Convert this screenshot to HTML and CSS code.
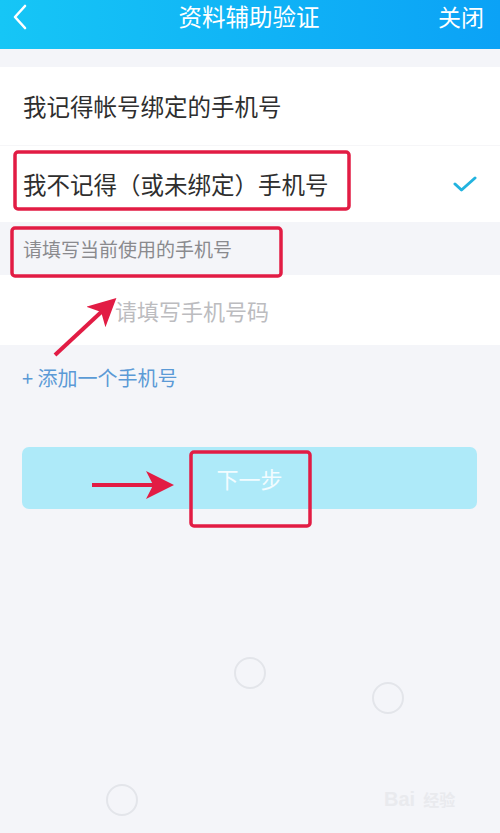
FILE: index.html
```html
<!DOCTYPE html>
<html lang="zh-CN">
<head>
  <meta charset="UTF-8">
  <meta name="viewport" content="width=device-width, initial-scale=1.0">
  <title>资料辅助验证</title>
  <link rel="stylesheet" href="styles.css">
</head>
<body>
  <div class="page">
    <header class="topbar">
      <svg class="back" width="16" height="26" viewBox="0 0 16 26">
        <polyline points="13,2 3,13 13,24" fill="none" stroke="#fff" stroke-width="2.6" stroke-linecap="round" stroke-linejoin="round"/>
      </svg>
      <h1 class="title">资料辅助验证</h1>
      <span class="close">关闭</span>
    </header>

    <div class="options">
      <div class="option">我记得帐号绑定的手机号</div>
      <div class="option selected">
        <span>我不记得（或未绑定）手机号</span>
        <svg class="check" width="24" height="18" viewBox="0 0 24 18">
          <polyline points="2,9 8.5,15 22,3" fill="none" stroke="#22b3df" stroke-width="3" stroke-linecap="round" stroke-linejoin="round"/>
        </svg>
      </div>
    </div>

    <div class="section-label">请填写当前使用的手机号</div>
    <div class="phone-row">
      <span class="placeholder">请填写手机号码</span>
    </div>
    <div class="add-phone">+ 添加一个手机号</div>

    <div class="btn-wrap">
      <div class="next-btn">下一步</div>
    </div>

    <div class="watermark">Bai<span>经验</span></div>

    <svg class="marks" width="500" height="833" viewBox="0 0 500 833">
      <defs>
        <marker id="head" markerWidth="7" markerHeight="7" refX="5.5" refY="3.5" orient="auto" markerUnits="strokeWidth">
          <path d="M0,0 L7,3.5 L0,7 L1.8,3.5 Z" fill="#e21c44"/>
        </marker>
      </defs>
      <rect x="15" y="152" width="334" height="57" rx="3" fill="none" stroke="#e21c44" stroke-width="3.5"/>
      <rect x="12" y="228" width="269" height="48" rx="3" fill="none" stroke="#e21c44" stroke-width="3.5"/>
      <rect x="191" y="452" width="119" height="74" rx="3" fill="none" stroke="#e21c44" stroke-width="3.5"/>
      <line x1="55" y1="355" x2="112" y2="302" stroke="#e21c44" stroke-width="4" marker-end="url(#head)"/>
      <line x1="92" y1="485" x2="168" y2="485" stroke="#e21c44" stroke-width="4" marker-end="url(#head)"/>
      <circle cx="250" cy="673" r="15" fill="#f4f5f9" stroke="#e3e5ea" stroke-width="2"/>
      <circle cx="388" cy="698" r="15" fill="#f4f5f9" stroke="#e3e5ea" stroke-width="2"/>
      <circle cx="122" cy="800" r="15" fill="#f4f5f9" stroke="#e3e5ea" stroke-width="2"/>
    </svg>
  </div>
</body>
</html>
```

FILE: styles.css
```css
body {
  margin: 0;
  background-color: #f4f5f9;
  font-family: "Noto Sans CJK SC", "Noto Sans", sans-serif;
}
.page {
  position: relative;
  width: 500px;
  height: 833px;
  overflow: hidden;
}
.topbar {
  height: 49px;
  display: grid;
  grid-template-columns: 1fr auto 1fr;
  align-items: start;
  padding: 0 16px 0 12px;
  background: linear-gradient(to right, #16c6f6, #0ba2f6);
  color: #fff;
}
.back {
  margin-top: 4px;
}
.title {
  margin: 0 0 0 2px;
  font-size: 23.5px;
  font-weight: normal;
  line-height: 32px;
}
.close {
  justify-self: end;
  font-size: 23px;
  line-height: 32px;
}
.options {
  margin-top: 18px;
  background-color: #fff;
}
.option {
  height: 78px;
  display: flex;
  align-items: center;
  justify-content: space-between;
  padding: 0 22px 0 23px;
  font-size: 23.5px;
  color: #2e2e2e;
}
.option + .option {
  border-top: 1px solid #f6f6f8;
  height: 76px;
}
.check {
  margin-right: 1px;
}
.section-label {
  height: 53px;
  display: flex;
  align-items: center;
  padding-left: 23px;
  font-size: 19px;
  color: #8a8a8e;
}
.phone-row {
  height: 70px;
  display: flex;
  align-items: center;
  padding-left: 115px;
  background-color: #fff;
}
.placeholder {
  font-size: 22px;
  color: #bcbcbf;
}
.add-phone {
  margin-top: 20px;
  padding-left: 22px;
  font-size: 20px;
  line-height: 26px;
  color: #5b9ad6;
}
.btn-wrap {
  padding: 56px 23px 0 22px;
}
.next-btn {
  height: 62px;
  display: flex;
  align-items: center;
  justify-content: center;
  border-radius: 7px;
  background-color: #aeeaf9;
  color: #f2fcff;
  font-size: 22px;
}
.watermark {
  position: absolute;
  left: 384px;
  top: 787px;
  font-family: "Liberation Sans", sans-serif;
  font-size: 20px;
  font-weight: bold;
  color: #e9eaee;
}
.watermark span {
  font-family: "Noto Sans CJK SC", sans-serif;
  font-size: 16px;
  margin-left: 8px;
}
.marks {
  position: absolute;
  top: 0;
  left: 0;
  pointer-events: none;
}
```
